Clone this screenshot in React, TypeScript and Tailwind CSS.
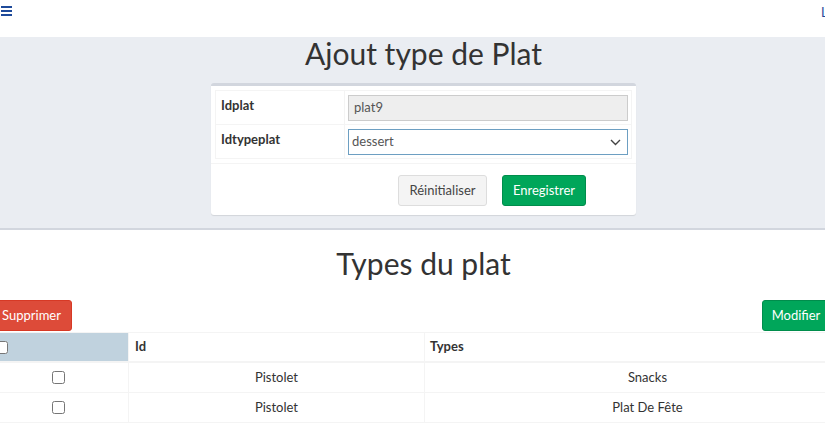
import React from "react";

const font = { fontFamily: "Lato, 'Noto Sans', sans-serif" };

export default function App() {
  return (
    <div className="w-[825px] h-[424px] overflow-hidden bg-white" style={font}>
      <div className="w-[847px] text-[13px] text-[#333]">
        {/* top bar */}
        <div className="relative h-[37px] bg-white">
          <div className="absolute left-[1px] top-[6px] flex flex-col gap-[2px]">
            <div className="w-[11px] h-[2px] bg-[#1e4a9a]" />
            <div className="w-[11px] h-[2px] bg-[#1e4a9a]" />
            <div className="w-[11px] h-[2px] bg-[#1e4a9a]" />
          </div>
          <div className="absolute left-[821px] top-[3px] text-[13px] text-[#1e4a9a] whitespace-nowrap">L</div>
        </div>

        {/* gray section */}
        <div className="bg-[#eaedf2] border-b-[2px] border-[#d2d6de] pb-[13px]">
          <h1 className="text-center text-[30px] leading-[33px] text-[#333]">Ajout type de Plat</h1>
          <div className="mx-auto mt-[13px] w-[425px] bg-white border-t-[3px] border-[#d2d6de] rounded-[3px] shadow-[0_1px_1px_rgba(0,0,0,0.1)]">
            <div className="px-[4px] pt-[4px]">
              <div className="border-t border-l border-[#f4f4f4]">
                <div className="flex h-[34px] border-b border-[#f4f4f4]">
                  <div className="w-[129px] border-r border-[#f4f4f4] px-[5px] pt-[5px] font-bold">Idplat</div>
                  <div className="flex-1 border-r border-[#f4f4f4] px-[3px] pt-[4px]">
                    <div className="h-[26px] border border-[#ccc] bg-[#eee] px-[5px] flex items-center text-[#555]">plat9</div>
                  </div>
                </div>
                <div className="flex h-[34px] border-b border-[#f4f4f4]">
                  <div className="w-[129px] border-r border-[#f4f4f4] px-[5px] pt-[5px] font-bold">Idtypeplat</div>
                  <div className="flex-1 border-r border-[#f4f4f4] px-[3px] pt-[4px]">
                    <div className="h-[26px] border border-[#6d9fc2] bg-white pl-[3px] pr-[6px] flex items-center justify-between text-[#555]">
                      <span>dessert</span>
                      <svg width="11" height="7" viewBox="0 0 11 7" fill="none" stroke="#444" strokeWidth="1.4">
                        <path d="M1 1 L5.5 5.5 L10 1" />
                      </svg>
                    </div>
                  </div>
                </div>
              </div>
            </div>
            <div className="mt-[4px] border-t border-[#f4f4f4] flex gap-[15px] pt-[11px] pb-[9px] pl-[187px]">
              <button className="h-[31px] w-[89px] bg-[#f4f4f4] border border-[#ddd] rounded-[3px] text-[#444]">Réinitialiser</button>
              <button className="h-[31px] w-[84px] bg-[#00a65a] border border-[#008d4c] rounded-[3px] text-white">Enregistrer</button>
            </div>
          </div>
        </div>

        {/* list section */}
        <div className="pt-[17px]">
          <h2 className="text-center text-[30px] leading-[33px] text-[#333]">Types du plat</h2>
          <div className="mt-[20px] ml-[-9px] w-[880px]">
            <div className="flex justify-between w-[839px]">
              <button className="h-[31px] w-[81px] bg-[#dd4b39] border border-[#d73925] rounded-[3px] text-white">Supprimer</button>
              <button className="h-[31px] w-[68px] bg-[#00a65a] border border-[#008d4c] rounded-[3px] text-white">Modifier</button>
            </div>
            <div className="ml-[-2px] mt-[1px] w-[881px] border-t border-[#f4f4f4]">
              <div className="flex h-[30px] border-b-[2px] border-[#f4f4f4] font-bold">
                <div className="w-[139px] bg-[#c0d2de] flex items-center px-[6px]">
                  <input type="checkbox" className="w-[13px] h-[13px] m-0" />
                </div>
                <div className="w-[296px] border-l border-[#f4f4f4] flex items-center px-[6px]">Id</div>
                <div className="flex-1 border-l border-[#f4f4f4] flex items-center px-[5px]">Types</div>
              </div>
              {[
                ["Pistolet", "Snacks"],
                ["Pistolet", "Plat De Fête"],
              ].map(([id, t], i) => (
                <div key={i} className="flex h-[30px] border-b border-[#f4f4f4]">
                  <div className="w-[139px] flex items-center justify-center">
                    <input type="checkbox" className="w-[13px] h-[13px] m-0" />
                  </div>
                  <div className="w-[296px] border-l border-[#f4f4f4] flex items-center justify-center">{id}</div>
                  <div className="flex-1 border-l border-[#f4f4f4] flex items-center justify-center">{t}</div>
                </div>
              ))}
            </div>
          </div>
        </div>
      </div>
    </div>
  );
}
